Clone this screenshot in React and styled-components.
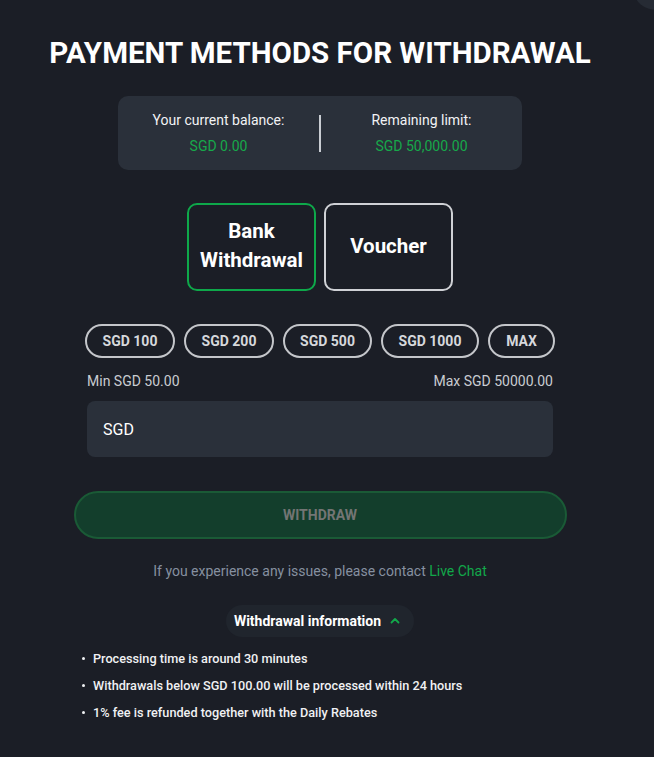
import React, { useState } from 'react';
import styled, { createGlobalStyle } from 'styled-components';

const GlobalStyle = createGlobalStyle`
  * { box-sizing: border-box; }
  body {
    margin: 0;
    background: #1b1e26;
    font-family: Roboto, "Liberation Sans", sans-serif;
    color: #fff;
  }
`;

const Page = styled.div`
  position: relative;
  width: 654px;
  min-height: 757px;
  overflow: hidden;
  background: #1b1e26;
`;

const CloseBlob = styled.div`
  position: absolute;
  top: -28px;
  right: -26px;
  width: 46px;
  height: 38px;
  border-radius: 50%;
  background: #262b34;
`;

const Wrapper = styled.div`
  width: 640px;
  display: flex;
  flex-direction: column;
  align-items: center;
  padding-top: 35px;
`;

const Title = styled.h1`
  margin: 0;
  font-size: 29.5px;
  font-weight: 700;
  line-height: 36px;
  text-align: center;
`;

const BalanceBox = styled.div`
  margin-top: 25px;
  width: 404px;
  height: 74px;
  border-radius: 10px;
  background: #2a303a;
  display: flex;
  align-items: center;
`;

const BalanceCol = styled.div`
  flex: 1;
  display: flex;
  flex-direction: column;
  align-items: center;
  gap: 9px;
`;

const Divider = styled.div`
  width: 2px;
  height: 37px;
  background: #c9cdd3;
`;

const Label = styled.span`
  font-size: 14px;
  line-height: 17px;
  color: #f2f3f5;
`;

const Amount = styled.span`
  font-size: 14px;
  line-height: 17px;
  color: #17a84a;
`;

const Methods = styled.div`
  margin-top: 33px;
  display: flex;
  gap: 8px;
`;

const Method = styled.button`
  width: 129px;
  height: 88px;
  border-radius: 10px;
  border: 2px solid ${({ $active }) => ($active ? '#0ea84a' : '#cfd1d5')};
  background: transparent;
  color: #fff;
  font-family: inherit;
  font-size: 20.5px;
  font-weight: 700;
  line-height: 29px;
  padding: 0 6px 2px;
  cursor: pointer;
`;

const Chips = styled.div`
  margin-top: 33px;
  display: flex;
  gap: 9px;
`;

const Chip = styled.button`
  height: 34px;
  min-width: ${({ $w }) => $w}px;
  padding: 0 14px;
  border-radius: 17px;
  border: 2px solid #c4c6ca;
  background: transparent;
  color: #d6d8dc;
  font-family: inherit;
  font-size: 14px;
  font-weight: 700;
  cursor: pointer;
`;

const LimitRow = styled.div`
  margin-top: 15px;
  width: 466px;
  display: flex;
  justify-content: space-between;
  font-size: 14px;
  line-height: 17px;
  color: #c9ccd1;
`;

const Input = styled.div`
  margin-top: 11px;
  width: 466px;
  height: 56px;
  border-radius: 8px;
  background: #2a303a;
  display: flex;
  align-items: center;
  padding: 0 16px;
  font-size: 16px;
  color: #fff;
`;

const WithdrawButton = styled.button`
  margin-top: 34px;
  width: 493px;
  height: 48px;
  border-radius: 24px;
  border: 2px solid #1a5a36;
  background: #133e2c;
  color: #737574;
  font-family: inherit;
  font-size: 14px;
  font-weight: 700;
`;

const Help = styled.p`
  margin: 24px 0 0;
  font-size: 14px;
  line-height: 17px;
  color: #8690a0;
`;

const Link = styled.a`
  color: #12a84a;
  text-decoration: none;
`;

const InfoToggle = styled.button`
  margin-top: 25px;
  height: 32px;
  padding: 0 13px 0 8px;
  border-radius: 16px;
  border: none;
  background: #20252d;
  color: #fff;
  font-family: inherit;
  font-size: 14px;
  font-weight: 700;
  display: flex;
  align-items: center;
  gap: 8px;
  cursor: pointer;
`;

const InfoList = styled.ul`
  margin: 14px 0 0 82px;
  padding: 0;
  list-style: none;
  align-self: flex-start;
  display: flex;
  flex-direction: column;
  gap: 11px;
`;

const InfoItem = styled.li`
  position: relative;
  padding-left: 11px;
  font-size: 12.7px;
  font-weight: 500;
  line-height: 16px;
  color: #f0f1f3;
  &::before {
    content: '';
    position: absolute;
    left: 0;
    top: 6px;
    width: 3px;
    height: 3px;
    border-radius: 50%;
    background: #f0f1f3;
  }
`;

const Chevron = ({ open }) => (
  <svg width="12" height="12" viewBox="0 0 12 12" fill="none">
    <path
      d={open ? 'M2.5 7.5 6 4l3.5 3.5' : 'M2.5 4.5 6 8l3.5-3.5'}
      stroke="#12a84a"
      strokeWidth="1.8"
      strokeLinecap="round"
      strokeLinejoin="round"
    />
  </svg>
);

const chips = [
  { label: 'SGD 100', w: 90 },
  { label: 'SGD 200', w: 90 },
  { label: 'SGD 500', w: 89 },
  { label: 'SGD 1000', w: 98 },
  { label: 'MAX', w: 67 },
];

const info = [
  'Processing time is around 30 minutes',
  'Withdrawals below SGD 100.00 will be processed within 24 hours',
  '1% fee is refunded together with the Daily Rebates',
];

const App = () => {
  const [method, setMethod] = useState('bank');
  const [open, setOpen] = useState(true);

  return (
    <Page>
      <GlobalStyle />
      <CloseBlob />
      <Wrapper>
        <Title>PAYMENT METHODS FOR WITHDRAWAL</Title>

        <BalanceBox>
          <BalanceCol>
            <Label>Your current balance:</Label>
            <Amount>SGD 0.00</Amount>
          </BalanceCol>
          <Divider />
          <BalanceCol>
            <Label>Remaining limit:</Label>
            <Amount>SGD 50,000.00</Amount>
          </BalanceCol>
        </BalanceBox>

        <Methods>
          <Method $active={method === 'bank'} onClick={() => setMethod('bank')}>
            Bank Withdrawal
          </Method>
          <Method $active={method === 'voucher'} onClick={() => setMethod('voucher')}>
            Voucher
          </Method>
        </Methods>

        <Chips>
          {chips.map((c) => (
            <Chip key={c.label} $w={c.w}>{c.label}</Chip>
          ))}
        </Chips>

        <LimitRow>
          <span>Min SGD 50.00</span>
          <span>Max SGD 50000.00</span>
        </LimitRow>

        <Input>SGD</Input>

        <WithdrawButton disabled>WITHDRAW</WithdrawButton>

        <Help>
          If you experience any issues, please contact <Link href="#">Live Chat</Link>
        </Help>

        <InfoToggle onClick={() => setOpen(!open)}>
          Withdrawal information
          <Chevron open={open} />
        </InfoToggle>

        {open && (
          <InfoList>
            {info.map((t) => (
              <InfoItem key={t}>{t}</InfoItem>
            ))}
          </InfoList>
        )}
      </Wrapper>
    </Page>
  );
};

export default App;
